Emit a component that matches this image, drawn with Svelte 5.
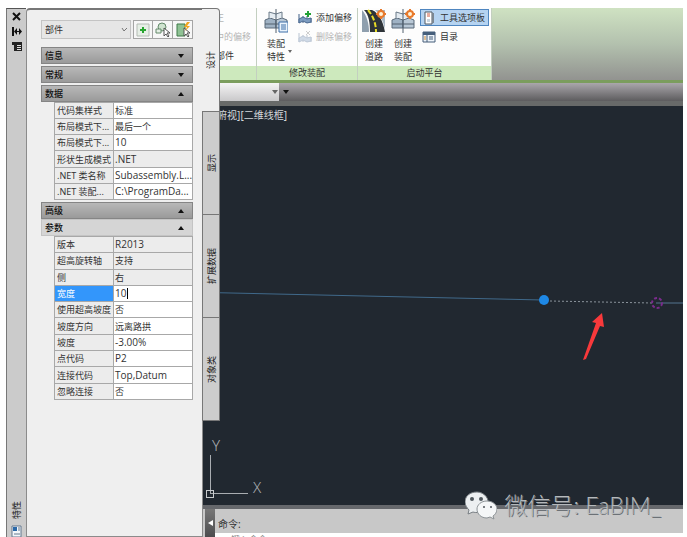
<script lang="ts">
  type Row = { label: string; value: string; readonly?: boolean; editing?: boolean };

  const general: Row[] = [
    { label: '代码集样式', value: '标准' },
    { label: '布局模式下...', value: '最后一个' },
    { label: '布局模式下...', value: '10' },
    { label: '形状生成模式', value: '.NET', readonly: true },
    { label: '.NET 类名称', value: 'Subassembly.L...' },
    { label: '.NET 装配...', value: 'C:\\ProgramDa...' },
  ];

  const params: Row[] = [
    { label: '版本', value: 'R2013', readonly: true },
    { label: '超高旋转轴', value: '支持', readonly: true },
    { label: '侧', value: '右', readonly: true },
    { label: '宽度', value: '10', editing: true },
    { label: '使用超高坡度', value: '否' },
    { label: '坡度方向', value: '远离路拱' },
    { label: '坡度', value: '-3.00%' },
    { label: '点代码', value: 'P2' },
    { label: '连接代码', value: 'Top,Datum' },
    { label: '忽略连接', value: '否' },
  ];

  const tabs = ['设计', '显示', '扩展数据', '对象类'];
  let activeTab = $state('设计');

  const isLatin = (s: string): boolean => /^[\x20-\x7e]+$/.test(s);
</script>

{#snippet rows(list: Row[])}
  <tbody>
    {#each list as r, i (i)}
      <tr class:readonly={r.readonly} class:editing={r.editing}>
        <th scope="row">{r.label}</th>
        <td class:latin={isLatin(r.value)}>
          {#if r.editing}
            <div class="edit">
              <input type="text" value={r.value} aria-label={r.label} />
              <span class="caret"></span>
            </div>
          {:else}
            {r.value}
          {/if}
        </td>
      </tr>
    {/each}
  </tbody>
{/snippet}

{#snippet section(title: string, open: boolean, sub = false)}
  <button class="section" class:sub aria-expanded={open}>
    <span>{title}</span>
    <svg width="6" height="4" viewBox="0 0 6 4">
      <path d={open ? 'M0 4L3 0L6 4Z' : 'M0 0H6L3 4Z'} fill="#111" />
    </svg>
  </button>
{/snippet}

{#snippet assembly()}
  <path d="M1 11L6 9L12 11V19H1Z" fill="#9fb2c4" stroke="#5b6b7b" />
  <path d="M12 11L18 9L23 11V19H12Z" fill="#b9c8d6" stroke="#5b6b7b" />
  <path d="M5 9V3L12 5L18 3V9" fill="#e4ebf1" stroke="#6b7a88" />
  <path d="M12 0V24M1 15H23" stroke="#53616f" fill="none" />
{/snippet}

{#snippet spark()}
  <path d="M19 0V10M14 5H24" stroke="#e8792b" stroke-width="2" />
  <circle cx="19" cy="5" r="3" fill="#fff2d8" stroke="#e8792b" stroke-width="2" />
{/snippet}

{#snippet offset(faded: boolean)}
  <svg class:faded width="14" height="14" viewBox="0 0 14 14">
    <path d="M1 12V3M5 12V5M9 12V5M13 12V7" stroke="#3f5f86" />
    <path d="M1 8L5 6L9 8L13 7V11L9 12L5 10L1 12Z" fill="#7d9cc0" stroke="#4a6890" />
    {#if faded}
      <path d="M8 1L12 5M12 1L8 5" stroke="#777" />
    {:else}
      <path d="M10 0V6M7 3H13" stroke="#22a035" stroke-width="2" />
    {/if}
  </svg>
{/snippet}

<div class="app">
  <header class="ribbon">
    <section class="panel under">
      <div class="panel-body list">
        <button class="faded">校正</button>
        <button class="faded">集中的偏移</button>
        <button class="indent">部件</button>
      </div>
      <div class="panel-title">&nbsp;</div>
    </section>
    <section class="panel modify">
      <div class="panel-body">
        <button class="big">
          <svg width="24" height="24" viewBox="0 0 24 24">
            {@render assembly()}
            <path d="M15 13H24V23H15Z" fill="#eaf3fc" stroke="#3d6fa8" />
            <path d="M17 16H22M17 18H22M17 20H22" stroke="#3d6fa8" />
          </svg>
          <span>装配<br />特性</span>
          <i class="drop"></i>
        </button>
        <div class="list">
          <button>{@render offset(false)}添加偏移</button>
          <button class="faded">{@render offset(true)}删除偏移</button>
        </div>
      </div>
      <div class="panel-title">修改装配</div>
    </section>
    <section class="panel launch">
      <div class="panel-body">
        <button class="big">
          <svg width="24" height="24" viewBox="0 0 24 24">
            <path d="M2 1H10C17 4 21 12 23 23H8C8 14 7 6 2 1Z" fill="#2e3439" />
            <path d="M6 1C11 7 14 14 14 23" fill="none" stroke="#e8dc28" stroke-width="2" stroke-dasharray="5 2" />
            <path d="M0 1V23H7C7 15 5 7 0 1Z" fill="#8f9fae" />
            <path d="M13 1H23V20C21 12 18 5 13 1Z" fill="#a9b8c6" />
            {@render spark()}
          </svg>
          <span>创建<br />道路</span>
        </button>
        <button class="big">
          <svg width="24" height="24" viewBox="0 0 24 24">
            {@render assembly()}
            {@render spark()}
          </svg>
          <span>创建<br />装配</span>
        </button>
        <div class="list">
          <button class="on">
            <svg width="14" height="14" viewBox="0 0 14 14">
              <path d="M3 1H10V13H3Z" fill="#fff" stroke="#4e5963" />
              <path d="M10 2H12V12H10Z" fill="#7c8792" />
              <path d="M5 3H8M5 5H8" stroke="#cf5b40" />
              <path d="M5 8H8V11H5Z" fill="#c8d4df" />
            </svg>
            工具选项板
          </button>
          <button>
            <svg width="14" height="14" viewBox="0 0 14 14">
              <path d="M1 2H13V12H1Z" fill="#eef4fa" stroke="#465f7b" />
              <path d="M1 2H13V5H1Z" fill="#465f7b" />
              <path d="M5 5V12M7 7H11M7 9H11" stroke="#465f7b" />
              <path d="M2 7H4M2 9H4" stroke="#d08a30" />
            </svg>
            目录
          </button>
        </div>
      </div>
      <div class="panel-title">启动平台</div>
    </section>
  </header>

  <div class="doc-bar">
    <div class="doc-tab"><i class="drop"></i></div>
    <i class="drop dark"></i>
  </div>

  <main class="canvas">
    <div class="view-label">[-][俯视][二维线框]</div>
    <svg class="drawing" role="img" aria-label="部件">
      <path d="M180 186L537 194" stroke="#40698a" />
      <path d="M544 195L646 197" stroke="#8b949c" stroke-dasharray="2 2" />
      <path d="M650 197H677" stroke="#55758f" />
      <circle cx="538" cy="194" r="5" fill="#1e88e5" />
      <circle cx="651" cy="197" r="5" fill="none" stroke="#7a2c8c" stroke-width="2" stroke-dasharray="3 2" />
      <path d="M596 207L586 216L590 217L577 254L580 253L594 220L598 221Z" fill="#f8393b" />
    </svg>
    <svg class="ucs" width="72" height="70" viewBox="0 0 72 70">
      <path d="M12.5 20V59M12 58.5H50" stroke="#a9adb1" />
      <rect x="8.5" y="55.5" width="7" height="7" fill="none" stroke="#c8cbce" />
      <text x="14" y="16">Y</text>
      <text x="55" y="58">X</text>
    </svg>
  </main>

  <footer class="command">
    <button class="grip" aria-label="命令行">
      <svg width="5" height="6" viewBox="0 0 5 6"><path d="M5 0V6L0 3Z" fill="#fff" /></svg>
    </button>
    <div class="history">
      <div class="prompt">命令:</div>
      <div class="entry">键入命令</div>
    </div>
  </footer>

  <div class="watermark">
    <svg width="32" height="29" viewBox="0 0 32 29">
      <path d="M12 1C5 1 0 5 0 11C0 14 2 17 4 19L3 23L8 21C10 22 20 22 22 16C26 8 19 1 12 1Z" fill="#eceff1" stroke="#777d82" />
      <path d="M22 10C16 10 12 14 12 18C12 23 16 27 22 27L25 26L29 28L28 25C30 24 32 21 32 18C32 14 28 10 22 10Z" fill="#f5f7f8" stroke="#8c9296" />
      <circle cx="7" cy="8" r="2" fill="#4f565c" />
      <circle cx="16" cy="8" r="2" fill="#4f565c" />
      <circle cx="19" cy="16" r="1" fill="#4f565c" />
      <circle cx="26" cy="16" r="1" fill="#4f565c" />
    </svg>
    <span>微信号: EaBIM_</span>
  </div>

  <aside class="palette">
    <div class="titlebar">
      <button aria-label="关闭">
        <svg width="9" height="9" viewBox="0 0 9 9"><path d="M1 1L8 8M8 1L1 8" stroke="#111" stroke-width="2" /></svg>
      </button>
      <button aria-label="自动隐藏">
        <svg width="10" height="9" viewBox="0 0 10 9">
          <path d="M1 0V9" stroke="#111" stroke-width="2" />
          <path d="M2 4.5L5 1V8ZM10 4.5L7 1V8Z" fill="#111" />
          <path d="M4 4.5H8" stroke="#111" />
        </svg>
      </button>
      <button aria-label="特性">
        <svg width="10" height="9" viewBox="0 0 10 9">
          <path d="M0 0H10V9H2V3H0Z" fill="#222" />
          <path d="M5 3.5H9M5 5.5H9M5 7.5H9" stroke="#ddd" />
        </svg>
      </button>
      <span class="title">特性</span>
      <svg width="11" height="12" viewBox="0 0 11 12">
        <path d="M1 1H10V12H1Z" fill="#f2f6fa" stroke="#64798f" />
        <path d="M2 2H6V6H2Z" fill="#2a68a8" />
        <path d="M7 3H9M7 5H9M3 9H9" stroke="#64798f" />
      </svg>
    </div>

    <div class="body">
      <div class="picker">
        <div class="combo">
          <select aria-label="对象类型"><option>部件</option></select>
          <svg width="7" height="5" viewBox="0 0 7 5"><path d="M1 1L3 4L6 1" fill="none" stroke="#777" /></svg>
        </div>
        <button aria-label="切换 PICKADD">
          <svg width="16" height="16" viewBox="0 0 16 16">
            <path d="M2 2H14V14H2Z" fill="#e6efe6" stroke="#b4bbb4" />
            <path d="M8 5V11M5 8H11" stroke="#27a52f" stroke-width="2" />
          </svg>
        </button>
        <button aria-label="选择对象">
          <svg width="16" height="16" viewBox="0 0 16 16">
            <circle cx="7" cy="5" r="4" fill="#cfe3cf" stroke="#64896b" />
            <path d="M1 7H6V11H1Z" fill="#e4efe4" stroke="#64896b" />
            <path d="M9 6V14L11 12L13 15L14 14L12 11H15Z" fill="#fff" stroke="#555" />
          </svg>
        </button>
        <button aria-label="快速选择">
          <svg width="16" height="16" viewBox="0 0 16 16">
            <path d="M2 2H10V14H2Z" fill="#8fc294" stroke="#3e7a48" />
            <path d="M9 6V14L11 12L13 15L14 14L12 11H15Z" fill="#fff" stroke="#555" />
            <path d="M12 0L9 5H12L10 9L15 4H12L15 0Z" fill="#f2a51f" />
          </svg>
        </button>
      </div>

      <div class="sections">
        {@render section('信息', false)}
        {@render section('常规', false)}
        <div>
          {@render section('数据', true)}
          <table class="general">{@render rows(general)}</table>
        </div>
        <div>
          {@render section('高级', true)}
          {@render section('参数', true, true)}
          <table class="params">{@render rows(params)}</table>
        </div>
      </div>
    </div>

    <nav class="tabs">
      {#each tabs as t (t)}
        <button class:active={t === activeTab} onclick={() => (activeTab = t)}>{t}</button>
      {/each}
    </nav>
  </aside>
</div>

<style>
  :global(body) {
    background: #fff;
  }
  .app {
    position: relative;
    display: flex;
    flex-direction: column;
    box-sizing: border-box;
    height: 100vh;
    margin: 0 4px 0 6px;
    padding-top: 8px;
    overflow: hidden;
    font: 9px/13px 'Noto Sans', 'Noto Sans CJK SC', sans-serif;
    color: #333;
  }
  button {
    border: 0;
    padding: 0;
    background: none;
    font: inherit;
    color: inherit;
  }
  svg {
    display: block;
    flex: none;
  }

  /* ribbon */
  .ribbon {
    display: flex;
    flex: none;
    height: 72px;
    background: linear-gradient(#cfe2c2, #b3c1ae 50%, #929390);
    border-bottom: 3px solid #7b9d5d;
  }
  .panel {
    display: flex;
    flex-direction: column;
    box-sizing: border-box;
    border-right: 1px solid #c3cfc0;
    background: #fdfdfd;
  }
  .under {
    width: 251px;
  }
  .modify {
    width: 101px;
  }
  .launch {
    width: 134px;
  }
  .panel-body {
    display: flex;
    flex: 1;
    gap: 6px;
    padding: 1px 2px 0 4px;
  }
  .launch .panel-body {
    gap: 5px;
  }
  .modify .panel-body {
    gap: 8px;
    padding-left: 7px;
  }
  .panel-title {
    height: 14px;
    line-height: 14px;
    text-align: center;
    background: #cde9bd;
  }
  .panel .list {
    flex-direction: column;
    gap: 2px;
  }
  .list {
    display: flex;
  }
  .list button {
    display: flex;
    align-items: center;
    gap: 4px;
    box-sizing: border-box;
    height: 17px;
    padding: 0 1px;
    border: 1px solid transparent;
    white-space: nowrap;
  }
  .under .list {
    padding-left: 198px;
  }
  .list .indent {
    padding-left: 11px;
  }
  .list .on {
    padding-right: 3px;
    border-color: #4f86c0;
    background: #b5d3f1;
  }
  .faded {
    color: #b5b5b5;
  }
  svg.faded {
    opacity: 0.35;
  }
  .big {
    position: relative;
    display: flex;
    flex-direction: column;
    align-items: center;
    align-self: flex-start;
    gap: 4px;
  }
  .drop {
    border: 3px solid transparent;
    border-top: 4px solid #666;
    border-bottom: 0;
  }
  .dark {
    border-top-color: #111;
  }
  .big .drop {
    position: absolute;
    right: -4px;
    bottom: 10px;
    border-width: 3px 2px 0;
  }

  .doc-bar {
    display: flex;
    flex: none;
    align-items: center;
    gap: 4px;
    height: 18px;
    border-bottom: 5px solid #686a69;
    background: linear-gradient(#aaa7ab, #5d5c5e);
  }
  .doc-tab {
    display: flex;
    align-items: center;
    justify-content: flex-end;
    box-sizing: border-box;
    width: 273px;
    height: 100%;
    padding-right: 1px;
    background: linear-gradient(#f4f4f4, #c9c8ca);
  }

  /* drawing area */
  .canvas {
    position: relative;
    flex: 1;
    background: #212830;
  }
  .view-label {
    padding: 3px 0 0 198px;
    font-size: 10px;
    color: #d5d8db;
  }
  .drawing {
    position: absolute;
    inset: 0;
    width: 100%;
    height: 100%;
  }
  .ucs {
    position: absolute;
    left: 192px;
    bottom: 0;
  }
  .ucs text {
    font-size: 15px;
    font-weight: 300;
    fill: #a9adb1;
  }

  .command {
    display: flex;
    flex: none;
    height: 28px;
    padding-left: 199px;
    border-top: 4px solid #66686c;
    background: #c8c8c8;
  }
  .grip {
    display: flex;
    align-items: center;
    justify-content: center;
    width: 10px;
    background: linear-gradient(#777, #4c4c4e);
  }
  .history {
    flex: 1;
  }
  .prompt {
    height: 24px;
    padding-left: 3px;
    font-size: 10px;
    line-height: 31px;
  }
  .entry {
    height: 4px;
    padding-left: 16px;
    background: #fff;
    color: #888;
  }

  .watermark {
    position: absolute;
    right: 22px;
    bottom: 16px;
    display: flex;
    align-items: center;
    gap: 7px;
    font: 300 23px/32px Lato, 'Noto Sans CJK SC', sans-serif;
    color: #b5b9bc;
    text-shadow: 1px 1px 0 #6c7176;
  }

  /* properties palette */
  .palette {
    position: absolute;
    left: 0;
    top: 8px;
    bottom: 0;
    display: flex;
  }
  .titlebar {
    display: flex;
    flex-direction: column;
    align-items: center;
    gap: 6px;
    box-sizing: border-box;
    width: 20px;
    padding-top: 3px;
    border-left: 1px solid #777;
    border-top: 1px solid #555;
    background: #cbcbcb;
  }
  .title {
    margin-top: auto;
    writing-mode: vertical-rl;
    text-orientation: sideways;
    transform: rotate(180deg);
    color: #222;
  }
  .body {
    box-sizing: border-box;
    width: 177px;
    padding: 10px 9px 0 14px;
    border: 1px solid #8b8b8b;
    border-top: 2px solid #777;
    border-radius: 4px 0 0 0;
    background: #efefef;
  }
  .picker {
    display: flex;
    height: 19px;
    margin-bottom: 8px;
  }
  .combo {
    position: relative;
    flex: 1;
    margin-right: 2px;
  }
  .combo select {
    width: 100%;
    height: 100%;
    padding: 0 3px;
    border: 1px solid #c4c4c4;
    border-radius: 0;
    appearance: none;
    background: #e6e6e6;
    font: inherit;
    color: #333;
  }
  .combo svg {
    position: absolute;
    right: 3px;
    top: 7px;
  }
  .picker button {
    display: flex;
    align-items: center;
    justify-content: center;
    box-sizing: border-box;
    width: 20px;
    border: 1px solid #a5a5a5;
    background: #f7f7f7;
  }
  .picker button + button {
    border-left: 0;
  }
  .sections {
    display: flex;
    flex-direction: column;
    gap: 2px;
  }
  .section {
    display: flex;
    align-items: center;
    justify-content: space-between;
    box-sizing: border-box;
    width: 100%;
    height: 17px;
    padding: 0 8px 0 3px;
    border: 1px solid #858585;
    background: linear-gradient(#b8b8b8, #9a9a9a);
    font-weight: 500;
    color: #111;
  }
  .section.sub {
    border-color: #c4c4c4;
    background: #d5d5d5;
  }
  table {
    width: calc(100% - 13px);
    margin-left: 13px;
    border-collapse: collapse;
    table-layout: fixed;
  }
  .general {
    height: 98px;
  }
  .params {
    height: 164px;
  }
  th,
  td {
    padding: 0 0 0 1px;
    border: 1px solid #a8a8a8;
    background: #fff;
    font-weight: 400;
    line-height: 13px;
    text-align: left;
    white-space: nowrap;
  }
  th {
    width: 56px;
    padding-left: 2px;
    background: #ececec;
  }
  .readonly td {
    background: #ececec;
  }
  .latin {
    font-family: 'Open Sans', 'Noto Sans', sans-serif;
    font-size: 10px;
  }
  .editing th {
    background: #3396fb;
    color: #fff;
  }
  .edit {
    position: relative;
    display: flex;
  }
  .edit input {
    width: 100%;
    height: 13px;
    padding: 0;
    border: 0;
    outline: 0;
    background: none;
    font: inherit;
    color: inherit;
  }
  .caret {
    position: absolute;
    left: 12px;
    top: 1px;
    width: 1px;
    height: 11px;
    background: #000;
  }

  .tabs {
    display: flex;
    flex-direction: column;
    width: 18px;
    margin-left: -1px;
  }
  .tabs button {
    box-sizing: border-box;
    height: 103px;
    border: 1px solid #777;
    border-bottom-width: 0;
    background: #cdcdcd;
    writing-mode: vertical-rl;
    text-orientation: sideways;
    transform: rotate(180deg);
    color: #222;
  }
  .tabs .active {
    height: 104px;
    border-width: 1px 0 1px 1px;
    border-radius: 0 0 0 4px;
    background: #efefef;
  }
</style>
